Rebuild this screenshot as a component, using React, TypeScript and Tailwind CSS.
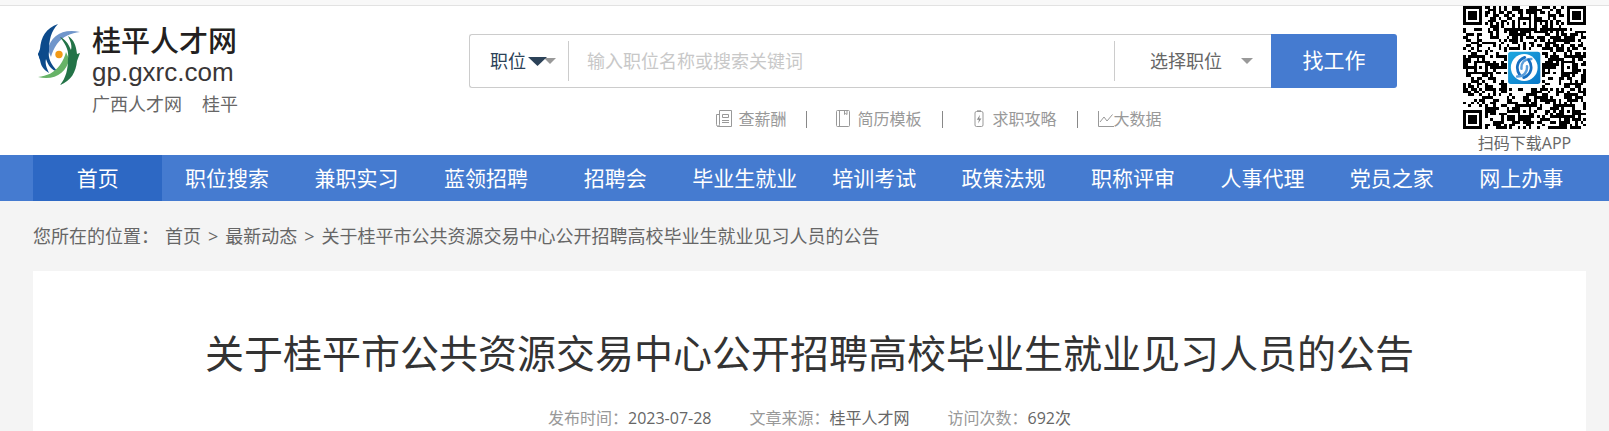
import React from "react";

const navItems = [
  "首页", "职位搜索", "兼职实习", "蓝领招聘", "招聘会", "毕业生就业",
  "培训考试", "政策法规", "职称评审", "人事代理", "党员之家", "网上办事",
];

const articleTitle = "关于桂平市公共资源交易中心公开招聘高校毕业生就业见习人员的公告";

const QR_SIZE = 45;

function buildQrPath(): string {
  const finders = [[0, 0], [QR_SIZE - 7, 0], [0, QR_SIZE - 7]];
  const aligns = [[22, 6], [6, 22], [38, 22], [22, 38], [38, 38]];
  let seed = 20230728;
  let path = "";
  for (let y = 0; y < QR_SIZE; y++) {
    for (let x = 0; x < QR_SIZE; x++) {
      seed = (Math.imul(seed, 1664525) + 1013904223) >>> 0;
      let dark = seed / 4294967296 < 0.5;
      if (y === 6 || x === 6) dark = (x + y) % 2 === 0;
      for (const [ax, ay] of aligns) {
        const d = Math.max(Math.abs(x - ax), Math.abs(y - ay));
        if (d <= 2) dark = d !== 1;
      }
      for (const [fx, fy] of finders) {
        const d = Math.max(Math.abs(x - fx - 3), Math.abs(y - fy - 3));
        if (d <= 4) dark = d !== 2 && d !== 4;
      }
      if (Math.abs(x - 22) <= 6 && Math.abs(y - 22) <= 6) dark = false;
      if (dark) path += `M${x} ${y}h1v1h-1z`;
    }
  }
  return path;
}

const qrPath = buildQrPath();

function QrCode() {
  return (
    <svg viewBox="0 0 45 45" className="block h-[123px] w-[123px]" role="img" aria-label="扫码下载APP">
      <path d={qrPath} fill="#000" shapeRendering="crispEdges" />
      <defs>
        <linearGradient id="badge" x1="0" y1="0" x2="1" y2="1">
          <stop offset="0" stopColor="#1ea8e0" />
          <stop offset="1" stopColor="#0a78c8" />
        </linearGradient>
      </defs>
      <rect x="16.5" y="16.7" width="11.8" height="11.8" rx="1" fill="url(#badge)" />
      <circle cx="22.4" cy="22.5" r="4.9" fill="#fff" />
      <g fill="none" strokeLinecap="round">
        <path d="M22.6 18.8C19.6 20 19.2 23 20.8 25.3" stroke="#176fc0" strokeWidth="1" />
        <path d="M25 19.4C22.3 19.3 21.2 21 21.4 23" stroke="#5b9fdc" strokeWidth=".9" />
        <path d="M22.2 26.2C25.2 25 25.6 22 24 19.7" stroke="#176fc0" strokeWidth="1" />
        <path d="M19.8 25.8C22.5 25.8 23.6 24 23.4 22" stroke="#5b9fdc" strokeWidth=".9" />
      </g>
    </svg>
  );
}

function LogoMark() {
  return (
    <svg viewBox="-1 0 50 70" className="mt-[14px] h-[70px] w-[50px] shrink-0" aria-hidden="true">
      <path d="M14 30C16 16 29 8 46 12C37 13 29 16 23 24C20 28 18 33 17 37Z" fill="#7096cb" />
      <path d="M24 4C12 8 7 17 6 29L4 34C5 36 5 38 6 40C7 46 9 49 15 53C12 47 11 43 12 39C14 45 17 50 24 52C16 43 14 38 15 31C15 20 17 11 24 4Z" fill="#0c4a8b" />
      <path d="M8 30L4 34L6 39Z" fill="#0c4a8b" />
      <path d="M35 39C33 53 20 61 4 57C13 56 20 53 26 45C29 41 31 36 32 32Z" fill="#67b367" />
      <path d="M26 65C37 61 42 52 43 41L46 33L43 34C42 25 40 20 34 16C37 22 38 26 37 30C34 23 31 19 26 17C33 26 35 32 34 39C34 49 32 58 26 65Z" fill="#237347" />
      <circle cx="25" cy="34.5" r="3.7" fill="#f29a16" />
    </svg>
  );
}

const iconStroke = { fill: "none", stroke: "#999", strokeWidth: 1 };

function SalaryIcon() {
  return (
    <svg viewBox="0 0 16 18" className="h-[18px] w-4" aria-hidden="true" {...iconStroke}>
      <path d="M3.500 .5h12v16H2.500a2 2 0 0 1-2-2V4.500h3M3.500 .5v14a2 2 0 0 1-2 2" />
      <path d="M6.500 4.500h6v3h-6zM6 10.500h7M6 12.500h7" />
    </svg>
  );
}

function ResumeIcon() {
  return (
    <svg viewBox="0 0 16 18" className="h-[18px] w-4" aria-hidden="true" {...iconStroke}>
      <path d="M2.500 .5h11a1 1 0 0 1 1 1v14a1 1 0 0 1-1 1h-11a1 1 0 0 1-1-1v-14a1 1 0 0 1 1-1zM4.500 .5v16M9.500 .5v4l1.200-1 1.300 1v-4" />
    </svg>
  );
}

function GuideIcon() {
  return (
    <svg viewBox="0 0 16 18" className="h-[18px] w-4" aria-hidden="true" {...iconStroke}>
      <path d="M5.500 1.500h5a1.500 1.500 0 0 1 1.500 1.500v12a1.500 1.500 0 0 1-1.500 1.500h-5A1.500 1.500 0 0 1 4 15V3a1.500 1.500 0 0 1 1.500-1.500zM6 .8h4" />
      <path d="M9 4.800L5.800 9.700h2.200L7 13.500l3.400-5H8.200z" fill="#888" stroke="none" />
    </svg>
  );
}

function ChartIcon() {
  return (
    <svg viewBox="0 0 16 18" className="h-[18px] w-4" aria-hidden="true" {...iconStroke}>
      <path d="M.5 1v15.500H16M2 12l4-5 3 4 5.500-6.500" />
    </svg>
  );
}

function GrayCaret() {
  return (
    <svg viewBox="0 0 12 6" className="h-1.5 w-3" aria-hidden="true">
      <path d="M0 0h12L6 6z" fill="#999" />
    </svg>
  );
}

function QuickLink({ icon, gap, children }: { icon: React.ReactNode; gap?: boolean; children: string }) {
  return (
    <a href="#" className={gap ? "flex items-center gap-1.5" : "flex items-center"}>
      {icon}
      {children}
    </a>
  );
}

function Bar() {
  return <span className="h-[17px] w-px bg-[#888]" />;
}

function Meta({ label, value }: { label: string; value: string }) {
  return (
    <span className="text-[#999]">
      {label}：<span className="text-[#666]">{value}</span>
    </span>
  );
}

export default function App() {
  return (
    <div className="min-h-screen bg-[#f4f4f4] font-['Open_Sans','Noto_Sans_CJK_SC',sans-serif] text-[#666]">
      <div className="h-1.5 border-b border-[#e2e2e2] bg-[#f8f8f8]" />

      <header className="bg-white">
        <div className="flex h-[149px] pr-[23px] pl-[33px]">
          <div className="flex w-[436px] shrink-0">
            <LogoMark />
            <div className="ml-[9px] flex flex-col pt-[20px] text-[#231f20]">
              <a href="#" className="block">
                <span className="block text-[29px] leading-[30px] font-medium">桂平人才网</span>
                <span className="block font-['Liberation_Sans',sans-serif] text-[26px] leading-[32px] text-[#3a3637]">gp.gxrc.com</span>
              </a>
              <div className="mt-0.5 flex gap-5 text-lg leading-7 text-[#666]">
                <a href="#">广西人才网</a>
                <a href="#">桂平</a>
              </div>
            </div>
          </div>

          <div className="mr-[66px] min-w-0 flex-1 pt-[28px]">
            <form className="flex h-[54px] text-lg" onSubmit={(e) => e.preventDefault()}>
              <div className="flex min-w-0 flex-1 items-center rounded-l-[3px] border border-r-0 border-[#ccc]">
                <label className="flex items-center pl-5">
                  <select aria-label="搜索类型" className="w-[38px] appearance-none bg-transparent text-[#2c4258] outline-none">
                    <option>职位</option>
                  </select>
                  <svg viewBox="0 0 28 9" className="h-[9px] w-7" aria-hidden="true">
                    <path d="M16 1h12L22 7z" fill="#999" />
                    <path d="M0 0h19L9.500 9z" fill="#2c4258" />
                  </svg>
                </label>
                <span className="ml-3 h-10 w-px bg-[#ccc]" />
                <input
                  type="text"
                  aria-label="搜索关键词"
                  placeholder="输入职位名称或搜索关键词"
                  className="min-w-0 flex-1 bg-transparent px-[18px] outline-none placeholder:text-[#c8c8c8]"
                />
                <span className="h-10 w-px bg-[#ccc]" />
                <label className="flex items-center gap-[18px] pr-[18px] pl-[35px]">
                  <select aria-label="职位类别" className="w-[73px] appearance-none bg-transparent text-[#666] outline-none">
                    <option>选择职位</option>
                  </select>
                  <GrayCaret />
                </label>
              </div>
              <button type="submit" className="w-[126px] rounded-r-[3px] bg-[#457bd0] pb-0.5 text-[21px] text-white">
                找工作
              </button>
            </form>
            <div className="mt-[19px] flex items-center justify-center gap-5 pl-3 text-base leading-6 text-[#999]">
              <QuickLink icon={<SalaryIcon />} gap>查薪酬</QuickLink>
              <Bar />
              <span className="pl-2"><QuickLink icon={<ResumeIcon />} gap>简历模板</QuickLink></span>
              <Bar />
              <span className="pl-2"><QuickLink icon={<GuideIcon />} gap>求职攻略</QuickLink></span>
              <Bar />
              <QuickLink icon={<ChartIcon />}>大数据</QuickLink>
            </div>
          </div>

          <div className="shrink-0 text-center">
            <QrCode />
            <p className="text-base leading-7">扫码下载APP</p>
          </div>
        </div>
      </header>

      <nav className="bg-[#457bd0] pr-[23px] pl-[33px]">
        <ul className="grid grid-cols-12 text-center text-[21px] leading-[46px] whitespace-nowrap text-white">
          {navItems.map((item, i) => (
            <li key={item} className={i === 0 ? "bg-[#2d68c4]" : ""}>
              <a href="#" className="block">{item}</a>
            </li>
          ))}
        </ul>
      </nav>

      <main className="pr-[23px] pl-[33px]">
        <div className="flex h-[70px] items-center text-lg">
          <span className="mr-1.5">您所在的位置：</span>
          <a href="#">首页</a>
          <span className="mx-[7px]">&gt;</span>
          <a href="#">最新动态</a>
          <span className="mx-[7px]">&gt;</span>
          <span>{articleTitle}</span>
        </div>
        <article className="bg-white pt-[54px] pb-px text-center">
          <h1 className="text-[39px] leading-[56px] text-[#333]">{articleTitle}</h1>
          <div className="mt-[25px] flex justify-center gap-[38px] text-base leading-6">
            <Meta label="发布时间" value="2023-07-28" />
            <Meta label="文章来源" value="桂平人才网" />
            <Meta label="访问次数" value="692次" />
          </div>
        </article>
      </main>
    </div>
  );
}
